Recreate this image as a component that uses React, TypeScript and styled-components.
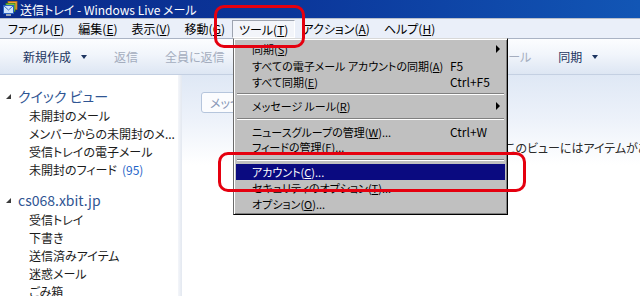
import React from 'react';
import styled, { createGlobalStyle, css } from 'styled-components';

const GlobalStyle = createGlobalStyle`
  html, body {
    margin: 0;
    padding: 0;
    background: #fff;
  }
  body {
    font-family: "Noto Sans CJK JP", "Noto Sans", sans-serif;
    font-size: 12px;
    font-feature-settings: "palt";
    overflow: hidden;
  }
`;

const Window = styled.div`
  position: relative;
  width: 640px;
  height: 296px;
  overflow: hidden;
  display: flex;
  flex-direction: column;
  background: #fff;
`;

const TitleBar = styled.div`
  flex: none;
  height: 18px;
  display: flex;
  align-items: center;
  gap: 2px;
  padding-left: 2px;
  background: linear-gradient(to right, #0a2a8a 0%, #0b369a 45%, #1256b5 100%);
  color: #fff;
  font-size: 12px;
  white-space: nowrap;
`;

const MenuBar = styled.div`
  flex: none;
  height: 19px;
  display: flex;
  align-items: stretch;
  padding-left: 1px;
  background: #eaeff9;
  border-top: 1px solid #b9bfcb;
  border-bottom: 1px solid #aab3c4;
  white-space: nowrap;
`;

const MenuTitle = styled.div<{ $open?: boolean }>`
  display: flex;
  align-items: center;
  padding: 0 7px;
  color: #000;
  ${p =>
    p.$open &&
    css`
      margin-top: 1px;
      padding: 0 6px;
      background: #f3f5fa;
      border: 1px solid;
      border-color: #9ea4b0 #fff #fff #9ea4b0;
    `}
`;

const Toolbar = styled.div`
  flex: none;
  height: 35px;
  display: flex;
  align-items: center;
  gap: 27px;
  padding-left: 23px;
  background: linear-gradient(#fcfdff 0%, #f1f5fb 45%, #dde6f3 100%);
  border-bottom: 1px solid #c4d0e2;
  font-size: 12px;
  white-space: nowrap;
`;

const ToolButton = styled.span<{ $disabled?: boolean }>`
  display: inline-flex;
  align-items: center;
  gap: 10px;
  color: ${p => (p.$disabled ? '#a4adbe' : '#1d3560')};
`;

const Caret = styled.span`
  width: 0;
  height: 0;
  border-left: 3px solid transparent;
  border-right: 3px solid transparent;
  border-top: 4px solid #1d3560;
`;

const Body = styled.div`
  flex: 1;
  display: flex;
  min-height: 0;
`;

const FolderPane = styled.div`
  flex: none;
  width: 178px;
  padding-top: 11px;
  background: #fff;
`;

const Splitter = styled.div`
  flex: none;
  width: 4px;
  background: linear-gradient(to right, #f4f6fa, #e3e8f0);
`;

const FolderGroup = styled.div`
  margin-bottom: 12px;
`;

const GroupHeader = styled.div`
  height: 20px;
  display: flex;
  align-items: center;
  gap: 7px;
  padding-left: 6px;
  color: #2f5593;
  font-size: 14px;
  white-space: nowrap;
`;

const Expander = styled.span`
  width: 0;
  height: 0;
  border-left: 5px solid transparent;
  border-bottom: 5px solid #3b3b3b;
`;

const FolderItem = styled.div`
  height: 18px;
  display: flex;
  align-items: center;
  gap: 5px;
  padding-left: 29px;
  color: #1b1b1b;
  white-space: nowrap;
`;

const Count = styled.span`
  color: #1f64c8;
`;

const ListPane = styled.div`
  flex: 1;
  display: flex;
  flex-direction: column;
  background: linear-gradient(#dfe8f5 0px, #edf2fa 45px, #fff 90px);
  white-space: nowrap;
`;

const SearchBox = styled.div`
  width: 220px;
  height: 21px;
  margin: 17px 0 0 19px;
  display: flex;
  align-items: center;
  padding-left: 8px;
  box-sizing: border-box;
  border: 1px solid #b5c5dc;
  border-radius: 3px;
  background: #fbfcfe;
  color: #8797b6;
`;

const EmptyNote = styled.div`
  margin: 26px 0 0 323px;
  color: #2a2a2a;
`;

const DropMenu = styled.div`
  position: absolute;
  left: 233px;
  top: 38px;
  width: 275px;
  box-sizing: border-box;
  padding: 2px;
  background: #c0c0c0;
  border: 1px solid;
  border-color: #d8d8d8 #000 #000 #6a6a6a;
  box-shadow: inset 1px 1px 0 #fff, inset -1px -1px 0 #808080;
  font-size: 11px;
`;

const MenuRow = styled.div<{ $active?: boolean }>`
  height: 16px;
  display: grid;
  grid-template-columns: 198px 41px 14px;
  align-items: center;
  padding-left: 16px;
  color: ${p => (p.$active ? '#fff' : '#000')};
  background: ${p => (p.$active ? '#0a0a80' : 'transparent')};
  white-space: nowrap;
`;

const Shortcut = styled.span`
  font-size: 12px;
`;

const SubArrow = styled.span`
  justify-self: center;
  width: 0;
  height: 0;
  border-top: 4px solid transparent;
  border-bottom: 4px solid transparent;
  border-left: 4px solid #000;
`;

const Separator = styled.div`
  height: 9px;
  display: flex;
  flex-direction: column;
  justify-content: center;
  padding: 0 1px;
  &::before {
    content: '';
    height: 1px;
    background: #808080;
  }
  &::after {
    content: '';
    height: 1px;
    background: #fff;
  }
`;

const Callout = styled.div`
  position: absolute;
  box-sizing: border-box;
  border: 3px solid #e5000f;
  border-radius: 10px;
  pointer-events: none;
`;

const ToolsCallout = styled(Callout)`
  left: 214px;
  top: 5px;
  width: 91px;
  height: 43px;
`;

const AccountCallout = styled(Callout)`
  left: 218px;
  top: 152px;
  width: 308px;
  height: 40px;
`;

const AppIcon = () => (
  <svg width="16" height="16" viewBox="0 0 16 16">
    <rect x="6" y="0.5" width="9" height="8" fill="#f3a43a" stroke="#b86c10" strokeWidth="0.8" />
    <rect x="4" y="2.5" width="9" height="8" fill="#7cc242" stroke="#3f8a1c" strokeWidth="0.8" />
    <rect x="1.5" y="4.5" width="10" height="8" fill="#cfe3fb" stroke="#2b63c2" strokeWidth="1" />
    <path d="M2 5 L6.5 9 L11 5" fill="none" stroke="#2b63c2" strokeWidth="0.9" />
    <rect x="4" y="13" width="5" height="2" fill="#9aa4b4" />
  </svg>
);

const menuTitles = [
  { label: 'ファイル', key: 'F' },
  { label: '編集', key: 'E' },
  { label: '表示', key: 'V' },
  { label: '移動', key: 'G' },
  { label: 'ツール', key: 'T', open: true },
  { label: 'アクション', key: 'A' },
  { label: 'ヘルプ', key: 'H' },
];

type MenuEntry =
  | { sep: true }
  | { sep?: false; label: string; key: string; dots?: boolean; shortcut?: string; sub?: boolean; active?: boolean };

const toolsMenu: MenuEntry[] = [
  { label: '同期', key: 'S', sub: true },
  { label: 'すべての電子メール アカウントの同期', key: 'A', shortcut: 'F5' },
  { label: 'すべて同期', key: 'E', shortcut: 'Ctrl+F5' },
  { sep: true },
  { label: 'メッセージ ルール', key: 'R', sub: true },
  { sep: true },
  { label: 'ニュースグループの管理', key: 'W', dots: true, shortcut: 'Ctrl+W' },
  { label: 'フィードの管理', key: 'F', dots: true },
  { sep: true },
  { label: 'アカウント', key: 'C', dots: true, active: true },
  { label: 'セキュリティのオプション', key: 'T', dots: true },
  { label: 'オプション', key: 'O', dots: true },
];

const folderGroups = [
  {
    title: 'クイック ビュー',
    items: [
      { label: '未開封のメール' },
      { label: 'メンバーからの未開封のメ...' },
      { label: '受信トレイの電子メール' },
      { label: '未開封のフィード', count: '(95)' },
    ],
  },
  {
    title: 'cs068.xbit.jp',
    items: [
      { label: '受信トレイ' },
      { label: '下書き' },
      { label: '送信済みアイテム' },
      { label: '迷惑メール' },
      { label: 'ごみ箱' },
    ],
  },
];

const toolButtons = [
  { label: '新規作成', caret: true },
  { label: '返信', disabled: true },
  { label: '全員に返信', disabled: true },
  { label: '転送', disabled: true },
  { label: '電子メールに追加', disabled: true },
  { label: '削除', disabled: true },
  { label: '迷惑メール', disabled: true },
  { label: '同期', caret: true },
];

export default function App() {
  return (
    <>
      <GlobalStyle />
      <Window>
        <TitleBar>
          <AppIcon />
          <span>送信トレイ - Windows Live メール</span>
        </TitleBar>

        <MenuBar>
          {menuTitles.map(m => (
            <MenuTitle key={m.label} $open={m.open}>
              {m.label}(<u>{m.key}</u>)
            </MenuTitle>
          ))}
        </MenuBar>

        <Toolbar>
          {toolButtons.map(b => (
            <ToolButton key={b.label} $disabled={b.disabled}>
              {b.label}
              {b.caret && <Caret />}
            </ToolButton>
          ))}
        </Toolbar>

        <Body>
          <FolderPane>
            {folderGroups.map(g => (
              <FolderGroup key={g.title}>
                <GroupHeader>
                  <Expander />
                  {g.title}
                </GroupHeader>
                {g.items.map(it => (
                  <FolderItem key={it.label}>
                    {it.label}
                    {'count' in it && it.count && <Count>{it.count}</Count>}
                  </FolderItem>
                ))}
              </FolderGroup>
            ))}
          </FolderPane>
          <Splitter />
          <ListPane>
            <SearchBox>メッセージの検索</SearchBox>
            <EmptyNote>このビューにはアイテムがありません。</EmptyNote>
          </ListPane>
        </Body>

        <DropMenu>
          {toolsMenu.map((e, i) =>
            e.sep ? (
              <Separator key={i} />
            ) : (
              <MenuRow key={i} $active={e.active}>
                <span>
                  {e.label}(<u>{e.key}</u>){e.dots && '...'}
                </span>
                <Shortcut>{e.shortcut}</Shortcut>
                {e.sub ? <SubArrow /> : <span />}
              </MenuRow>
            )
          )}
        </DropMenu>

        <ToolsCallout />
        <AccountCallout />
      </Window>
    </>
  );
}
